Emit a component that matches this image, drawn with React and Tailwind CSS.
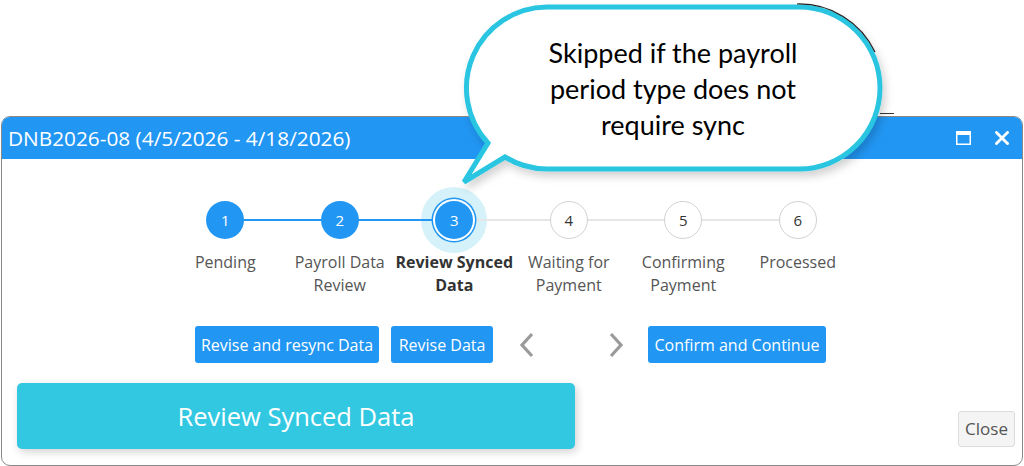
import React from "react";

const steps = [
  { n: 1, label: ["Pending"], state: "done" },
  { n: 2, label: ["Payroll Data", "Review"], state: "done" },
  { n: 3, label: ["Review Synced", "Data"], state: "active" },
  { n: 4, label: ["Waiting for", "Payment"], state: "todo" },
  { n: 5, label: ["Confirming", "Payment"], state: "todo" },
  { n: 6, label: ["Processed"], state: "todo" },
];

function Step({ s, i }) {
  const leftBlue = i <= 2;
  const rightBlue = i < 2;
  return (
    <div className="flex w-[114.5px] flex-col items-center">
      <div className="relative flex h-[38px] w-full justify-center">
        {s.state === "active" && (
          <div className="absolute left-1/2 top-1/2 h-[66px] w-[66px] -translate-x-1/2 -translate-y-1/2 rounded-full bg-[#d5f1f9]" />
        )}
        {i > 0 && (
          <div
            className={
              "absolute left-0 top-[18px] h-[2px] w-1/2 " +
              (leftBlue ? "bg-[#2196f3]" : "bg-[#e6e6e6]")
            }
          />
        )}
        {i < 5 && (
          <div
            className={
              "absolute right-0 top-[18px] h-[2px] w-1/2 " +
              (rightBlue ? "bg-[#2196f3]" : "bg-[#e6e6e6]")
            }
          />
        )}
        {s.state === "todo" ? (
          <div className="relative z-10 flex h-[38px] w-[38px] items-center justify-center rounded-full border border-[#d2d2d2] bg-white text-[15px] text-[#333]">
            {s.n}
          </div>
        ) : s.state === "active" ? (
          <div className="relative z-10 flex h-[38px] w-[38px] items-center justify-center rounded-full bg-[#2196f3] text-[15px] text-white shadow-[0_0_0_2px_#ffffff,0_0_0_3.5px_#2196f3]">
            {s.n}
          </div>
        ) : (
          <div className="relative z-10 flex h-[38px] w-[38px] items-center justify-center rounded-full bg-[#2196f3] text-[15px] text-white">
            {s.n}
          </div>
        )}
      </div>
      <div
        className={
          "mt-[12px] text-center text-[16px] leading-[23px] " +
          (s.state === "active" ? "font-bold text-[#333]" : "text-[#555]")
        }
      >
        {s.label.map((l, k) => (
          <div key={k} className="whitespace-nowrap">
            {l}
          </div>
        ))}
      </div>
    </div>
  );
}

function Callout() {
  return (
    <div className="pointer-events-none absolute left-0 top-0 z-20 h-[200px] w-[1024px]">
      <svg width="1024" height="200" className="absolute left-0 top-0">
        <defs>
          <filter id="sh" x="-10%" y="-10%" width="130%" height="140%">
            <feDropShadow dx="3" dy="5" stdDeviation="4" floodColor="#000" floodOpacity="0.18" />
          </filter>
        </defs>
        <path
          d="M 505 157 L 464 182 L 488 143 A 81 81 0 0 1 547 7 H 799 A 81 81 0 0 1 799 169 H 547 A 81 81 0 0 1 505 157 Z"
          fill="#ffffff"
          stroke="#29c5e0"
          strokeWidth="5"
          strokeLinejoin="miter"
          filter="url(#sh)"
        />
        <path d="M 797 4 A 84 84 0 0 1 875 52" fill="none" stroke="#222" strokeWidth="1.2" />
        <line x1="880" y1="113.5" x2="894" y2="113.5" stroke="#333" strokeWidth="1" />
      </svg>
      <div className="absolute left-[466px] top-[35px] w-[414px] text-center text-[27px] leading-[36px] text-black [font-family:Lato,'Open_Sans',sans-serif]">
        <div>Skipped if the payroll</div>
        <div>period type does not</div>
        <div>require sync</div>
      </div>
    </div>
  );
}

export default function App() {
  return (
    <div className="relative h-[466px] w-[1024px] overflow-hidden bg-white [font-family:'Open_Sans','Noto_Sans',sans-serif]">
      <Callout />
      <div className="h-[116px]" />
      <div className="mx-[1px] flex h-[350px] flex-col overflow-hidden rounded-[9px] border border-[#8a8a8a] bg-white">
        <div className="flex h-[42px] shrink-0 items-center justify-between bg-[#2196f3] pl-[6px] pr-[13px] text-white">
          <div className="text-[20.8px] leading-none">DNB2026-08 (4/5/2026 - 4/18/2026)</div>
          <div className="flex items-center gap-[24px]">
            <svg width="15" height="14" viewBox="0 0 15 14">
              <rect x="0.75" y="0.75" width="13.5" height="12.5" fill="none" stroke="#fff" strokeWidth="1.5" />
              <rect x="0" y="0" width="15" height="4" fill="#fff" />
            </svg>
            <svg width="14" height="14" viewBox="0 0 14 14">
              <path d="M1.5 1.5 L12.5 12.5 M12.5 1.5 L1.5 12.5" stroke="#fff" strokeWidth="2.8" strokeLinecap="square" />
            </svg>
          </div>
        </div>

        <div className="flex justify-center pt-[42px] pr-[1px]">
          {steps.map((s, i) => (
            <Step key={s.n} s={s} i={i} />
          ))}
        </div>

        <div className="mt-[29px] flex justify-center pr-[3px]">
          <button className="h-[37px] w-[184px] rounded-[3px] bg-[#2196f3] text-[16px] text-white">
            Revise and resync Data
          </button>
          <button className="ml-[12px] h-[37px] w-[102px] rounded-[3px] bg-[#2196f3] text-[16px] text-white">
            Revise Data
          </button>
          <div className="flex h-[37px] w-[68px] items-center justify-center">
            <svg width="16" height="26" viewBox="0 0 16 26">
              <polyline points="13,2 3,13 13,24" fill="none" stroke="#9a9a9a" strokeWidth="3.2" />
            </svg>
          </div>
          <div className="w-[23px]" />
          <div className="flex h-[37px] w-[64px] items-center justify-center">
            <svg width="16" height="26" viewBox="0 0 16 26">
              <polyline points="3,2 13,13 3,24" fill="none" stroke="#9a9a9a" strokeWidth="3.2" />
            </svg>
          </div>
          <button className="h-[37px] w-[178px] rounded-[3px] bg-[#2196f3] text-[16px] text-white">
            Confirm and Continue
          </button>
        </div>

        <div className="mt-[20px] flex items-end justify-between pl-[15px] pr-[7px]">
          <button className="h-[66px] w-[558px] rounded-[5px] bg-[#32c8e2] text-[25.5px] text-white shadow-[2px_3px_8px_rgba(0,0,0,0.18)]">
            Review Synced Data
          </button>
          <button className="mb-[2px] h-[36px] w-[57px] rounded-[3px] border border-[#dcdcdc] bg-[#f4f4f4] text-[17px] text-[#555]">
            Close
          </button>
        </div>
      </div>
    </div>
  );
}
